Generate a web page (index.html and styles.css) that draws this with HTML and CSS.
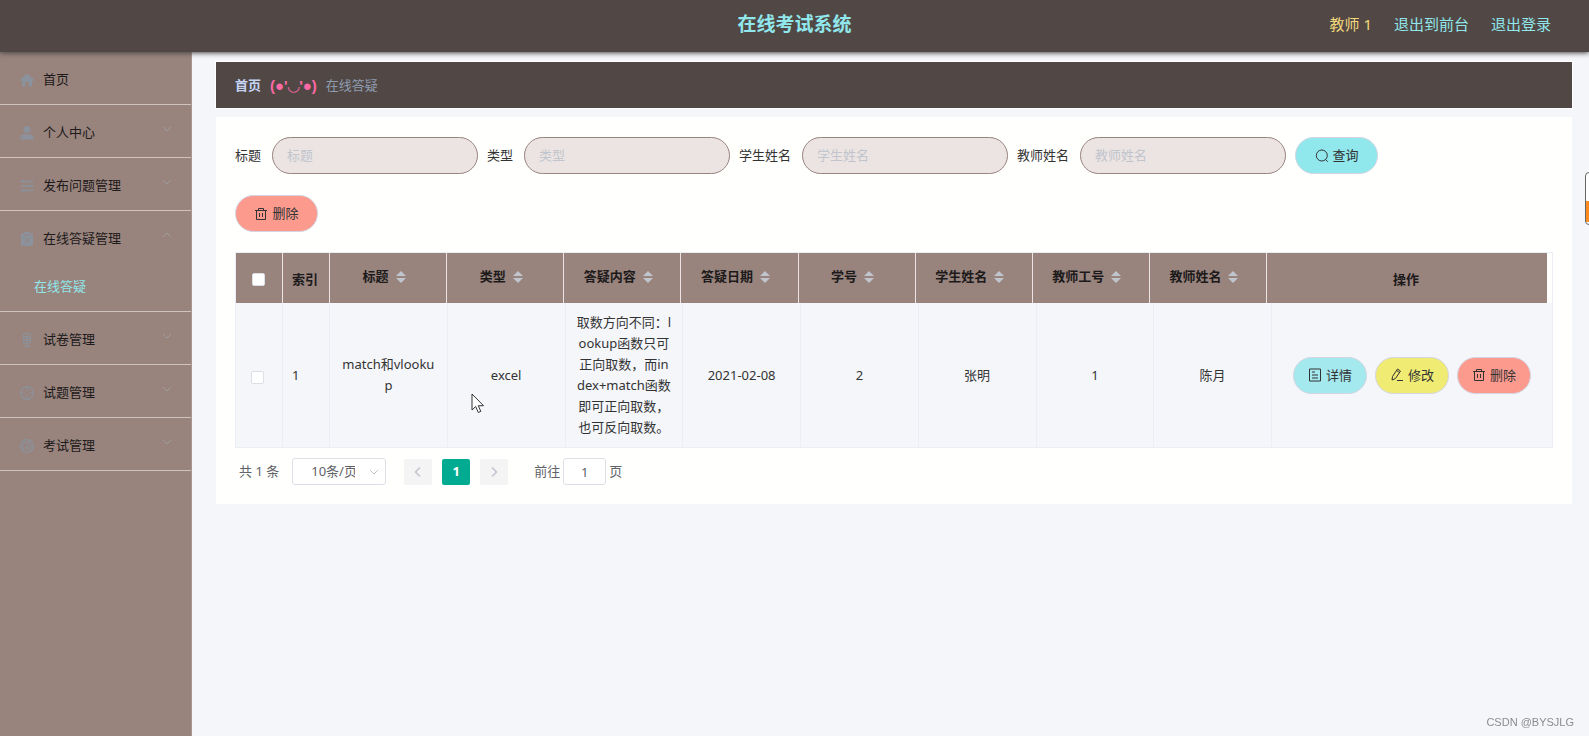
FILE: index.html
```html
<!DOCTYPE html>
<html lang="zh-CN">
<head>
<meta charset="utf-8">
<title>在线考试系统</title>
<link rel="stylesheet" href="styles.css">
</head>
<body>
<svg class="defs" aria-hidden="true">
  <symbol id="down" viewBox="0 0 10 6"><path d="M1 1l4 4 4-4" fill="none" stroke="currentColor"/></symbol>
  <symbol id="trash" viewBox="0 0 14 14"><path d="M1 3.5h12M4.5 3.5v-2h5v2M2.5 3.5v9h9v-9M5.500 6v4M8.500 6v4" fill="none" stroke="currentColor"/></symbol>
</svg>
<header class="topbar">
  <h1 class="title">在线考试系统</h1>
  <nav class="account">
    <span class="user">教师 1</span>
    <a href="#">退出到前台</a>
    <a href="#">退出登录</a>
  </nav>
</header>
<div class="layout">
  <nav class="sidebar">
    <ul class="menu">
      <li><a class="item" href="#"><svg class="icon" viewBox="0 0 14 14"><path d="M7 .5L.3 6.3V8H2v5.500h3.500V9h3v4.500H12V8h1.700V6.300z" fill="currentColor"/></svg><span>首页</span></a></li>
      <li><a class="item" href="#"><svg class="icon" viewBox="0 0 14 14"><circle cx="7" cy="3.600" r="3.500" fill="currentColor"/><path d="M.5 13.500v-2.500q0-2.500 2.500-2.500h8q2.500 0 2.500 2.500v2.500z" fill="currentColor"/></svg><span>个人中心</span><svg class="arrow"><use href="#down"/></svg></a></li>
      <li><a class="item" href="#"><svg class="icon" viewBox="0 0 14 14"><path d="M.5 2.500h13M.5 7h13M.5 11.500h13M3 1v3M10 5.500v3M4 10v3" fill="none" stroke="currentColor" stroke-width="1.300"/></svg><span>发布问题管理</span><svg class="arrow"><use href="#down"/></svg></a></li>
      <li><a class="item" href="#"><svg class="icon" viewBox="0 0 14 14"><path fill-rule="evenodd" d="M1 1.500h3V0h6v1.500h3V14H1zM4 2.500v1h6v-1z" fill="currentColor"/><path d="M4.800 6l4.400 4.400M9.200 6l-4.400 4.400" class="cut"/></svg><span>在线答疑管理</span><svg class="arrow up"><use href="#down"/></svg></a>
        <a class="subitem" href="#">在线答疑</a></li>
      <li><a class="item" href="#"><svg class="icon" viewBox="0 0 14 14"><rect x="3.500" y=".5" width="7" height="10" rx="1.500" fill="none" stroke="currentColor"/><path d="M3.500 3.500h7M3.500 5.500h7M3.500 7.500h7M7 1v12M3 13.500h8" fill="none" stroke="currentColor"/></svg><span>试卷管理</span><svg class="arrow"><use href="#down"/></svg></a></li>
      <li><a class="item" href="#"><svg class="icon" viewBox="0 0 14 14"><circle cx="7" cy="7" r="6.400" fill="none" stroke="currentColor" stroke-width="1.200"/><path d="M7 .5v4.500M7 9v4.500M.5 7H5M9 7h4.500" stroke="currentColor" stroke-width="1.200"/></svg><span>试题管理</span><svg class="arrow"><use href="#down"/></svg></a></li>
      <li><a class="item" href="#"><svg class="icon" viewBox="0 0 14 14"><circle cx="7" cy="7" r="6.400" fill="none" stroke="currentColor" stroke-width="1.200"/><path d="M4 10.500a4.300 4.300 0 1 1 6 0M7 8.500l1.500-4" fill="none" stroke="currentColor" stroke-width="1.200"/><circle cx="7" cy="9" r="1.300" fill="none" stroke="currentColor"/></svg><span>考试管理</span><svg class="arrow"><use href="#down"/></svg></a></li>
    </ul>
  </nav>
  <main class="main">
    <nav class="breadcrumb"><a href="#">首页</a><span class="face">(●'◡'●)</span><span>在线答疑</span></nav>
    <section class="card">
      <form class="filters">
        <label for="f1">标题</label><input id="f1" type="text" placeholder="标题">
        <label for="f2">类型</label><input id="f2" type="text" placeholder="类型">
        <label for="f3">学生姓名</label><input id="f3" type="text" placeholder="学生姓名">
        <label for="f4">教师姓名</label><input id="f4" type="text" placeholder="教师姓名">
        <button class="btn query" type="button"><svg viewBox="0 0 14 14"><circle cx="6.800" cy="6.500" r="5.500" fill="none" stroke="currentColor"/><path d="M10.500 10.500l2.200 2.200" stroke="currentColor"/></svg>查询</button>
      </form>
      <div class="actions"><button class="btn danger" type="button"><svg><use href="#trash"/></svg>删除</button></div>
      <div class="grid">
        <table class="head">
          <colgroup><col class="c-small"><col class="c-small"><col span="8"><col class="c-ops"></colgroup>
          <thead><tr>
            <th><input type="checkbox" aria-label="全选"></th><th>索引</th>
            <th class="sort">标题<i></i></th><th class="sort">类型<i></i></th><th class="sort">答疑内容<i></i></th><th class="sort">答疑日期<i></i></th><th class="sort">学号<i></i></th><th class="sort">学生姓名<i></i></th><th class="sort">教师工号<i></i></th><th class="sort">教师姓名<i></i></th>
            <th>操作</th>
          </tr></thead>
        </table>
        <table class="body">
          <colgroup><col class="c-small"><col class="c-small"><col span="8"><col class="c-ops"></colgroup>
          <tbody><tr>
            <td><input type="checkbox" aria-label="选择第 1 行"></td><td class="index">1</td>
            <td>match和vlookup</td><td>excel</td><td>取数方向不同：lookup函数只可正向取数，而in<br>dex+match函数即可正向取数，也可反向取数。</td><td>2021-02-08</td><td>2</td><td>张明</td><td>1</td><td>陈月</td>
            <td class="ops"><div class="row-actions">
              <button class="btn small detail" type="button"><svg viewBox="0 0 14 14"><path d="M1.500 1h11v12h-11zM4 4h3M4 7h6M4 10h6" fill="none" stroke="currentColor"/></svg>详情</button>
              <button class="btn small edit" type="button"><svg viewBox="0 0 14 14"><path d="M2.500 8.500L7.500 1l3 2-5 7.500-3.500 1.500zM6.500 2.500l3 2M7 12.500h6" fill="none" stroke="currentColor"/></svg>修改</button>
              <button class="btn small danger" type="button"><svg><use href="#trash"/></svg>删除</button>
            </div></td>
          </tr></tbody>
        </table>
      </div>
      <div class="pager">
        <span class="total">共 1 条</span>
        <span class="size"><select aria-label="每页条数"><option>10条/页</option></select><svg><use href="#down"/></svg></span>
        <div class="pages">
          <button type="button" disabled aria-label="上一页"><svg viewBox="0 0 8 12"><path d="M6 1.500L1.500 6 6 10.500" fill="none" stroke="currentColor" stroke-width="1.500"/></svg></button>
          <button type="button" class="current">1</button>
          <button type="button" disabled aria-label="下一页"><svg viewBox="0 0 8 12"><path d="M2 1.500L6.500 6 2 10.500" fill="none" stroke="currentColor" stroke-width="1.500"/></svg></button>
        </div>
        <label class="jump">前往<input type="text" value="1">页</label>
      </div>
    </section>
  </main>
</div>
<div class="float-widget"></div>
<svg class="cursor" viewBox="0 0 14 21"><path d="M1 1v16l3.700-3.500L7.300 19.500l2.500-1.100-2.500-5.700H12.500z" fill="#fff" stroke="#333"/></svg>
<div class="watermark">CSDN @BYSJLG</div>
</body>
</html>
```
FILE: styles.css
```css
* { box-sizing: border-box; }
body {
  margin: 0;
  min-height: 100vh;
  display: flex;
  flex-direction: column;
  background: #f5f6f9;
  color: #333;
  font: 13px/21px "Noto Sans", "Noto Sans CJK SC", sans-serif;
  overflow-x: hidden;
}
a { color: inherit; text-decoration: none; }
input, button, select { font: inherit; color: inherit; margin: 0; }
.defs { display: none; }

.topbar {
  display: grid;
  grid-template-columns: 1fr auto 1fr;
  align-items: center;
  height: 52px;
  padding: 0 38px 4px;
  background: #514845;
  box-shadow: 0 1px 5px #444;
  z-index: 1;
}
.title { grid-column: 2; margin: 0; color: #90e7ec; font-size: 19px; line-height: 28px; }
.account { display: flex; justify-content: flex-end; gap: 22px; font-size: 15px; color: #90e7ec; }
.user { color: #f4d87c; }

.layout { flex: 1; display: flex; }
.sidebar { flex: none; width: 192px; background: #98837d; border-right: 1px solid #a8968f; }
.menu { list-style: none; margin: 0; padding: 0; }
.menu li { border-bottom: 1px solid #d0c3bf; }
.item { display: flex; align-items: center; gap: 9px; height: 52px; padding: 3px 19px 0 20px; color: #1c1a1a; }
.icon { width: 14px; height: 14px; color: #8b929b; }
.cut { fill: none; stroke: #98837d; }
.arrow { width: 10px; height: 6px; margin: 0 0 8px auto; color: #a09da1; }
.arrow.up { transform: rotate(180deg); }
.subitem { display: block; height: 48px; padding: 13px 34px; color: #90e7ec; }

.main { flex: 1; min-width: 0; padding: 10px 17px 24px 24px; }
.breadcrumb {
  display: flex;
  align-items: center;
  gap: 9px;
  height: 46px;
  padding: 0 19px;
  background: #514845;
  box-shadow: 0 0 1px 1px #fff;
  color: #8f9cb0;
}
.breadcrumb a { color: #c5d4f5; font-weight: bold; }
.face { color: #ff69a5; font-family: "Liberation Sans", "DejaVu Sans", sans-serif; font-size: 15px; font-weight: bold; }

.card { margin-top: 9px; padding: 20px 19px 19px; background: #fffffe; }
.filters { display: flex; flex-wrap: wrap; align-items: center; row-gap: 8px; }
.filters label { margin-right: 11px; }
.filters input {
  width: 206px;
  height: 37px;
  margin-right: 9px;
  padding: 0 14px 2px;
  border: 1px solid #98837d;
  border-radius: 19px;
  background: #ece4e3;
}
.filters input::placeholder { color: #c0c4cc; opacity: 1; }
.btn {
  display: flex;
  align-items: center;
  justify-content: center;
  gap: 4px;
  width: 83px;
  height: 37px;
  padding: 0;
  border: 1px solid #d3d6e2;
  border-radius: 19px;
}
.btn svg { width: 14px; height: 14px; }
.btn.small { width: 74px; }
.query { background: #90e7ec; }
.detail { background: #a4e9ee; }
.edit { background: #f0eb73; }
.danger { background: #fc9a8e; }
.actions { margin: 21px 0 20px; }

.grid { border: 1px solid #ebeef5; background: #fffffe; }
table { width: 100%; table-layout: fixed; border-collapse: separate; border-spacing: 0; }
.head { width: calc(100% - 5px); }
.c-small { width: 47px; }
.c-ops { width: 280px; }
th { height: 50px; padding: 2px 2px 0 0; background: #98837d; border-right: 1px solid #ebe4e2; color: #1c1a1a; text-align: center; }
th:last-child, td:last-child { border-right: 0; }
th.sort { padding: 0 8px 3px 0; }
th.sort i { display: inline-grid; row-gap: 2px; margin-left: 7px; vertical-align: middle; }
th.sort i::before, th.sort i::after { content: ""; border: 5px solid transparent; border-top-width: 0; border-bottom: 5px solid #c0c4cc; }
th.sort i::after { border-bottom-width: 0; border-top: 5px solid #c0c4cc; }
td { height: 144px; padding: 9px; background: #f4f6fa; border-right: 1px solid #ebeef5; text-align: center; word-break: break-all; }
td:first-child { padding: 2px 4px 0 0; }
td.index { text-align: left; }
td.ops { padding: 0; }
.row-actions { display: flex; justify-content: center; gap: 8px; }
input[type="checkbox"] {
  appearance: none;
  width: 13px;
  height: 13px;
  border: 1px solid #dcdfe6;
  border-radius: 2px;
  background: #fff;
  vertical-align: middle;
}

.pager { display: flex; align-items: center; height: 27px; margin-top: 10px; padding-left: 4px; color: #606266; }
.total { margin-right: 13px; }
.size { position: relative; width: 94px; margin-right: 18px; }
.size select { width: 100%; height: 27px; padding: 0 30px 0 18px; appearance: none; border: 1px solid #dcdfe6; border-radius: 3px; background: #fff; display: block; }
.size svg { position: absolute; right: 7px; top: 11px; width: 10px; height: 6px; color: #c0c4cc; pointer-events: none; }
.pages { display: flex; gap: 10px; margin-right: 26px; }
.pages button { display: grid; place-items: center; width: 28px; height: 26px; padding: 0; border: 0; border-radius: 2px; background: #f4f4f5; color: #c0c4cc; }
.pages svg { width: 8px; height: 12px; }
.pages .current { background: #00ab91; color: #fff; font-weight: bold; }
.jump { display: flex; align-items: center; gap: 3px; }
.jump input { width: 43px; height: 27px; padding: 0; border: 1px solid #dcdfe6; border-radius: 3px; background: #fff; text-align: center; }

.float-widget { position: fixed; right: -40px; top: 172px; width: 44px; height: 53px; border: 1px solid #666; border-radius: 4px; background: linear-gradient(#fff 28px, #ff8a1e 28px 49px, #fff 49px); }
.cursor { position: absolute; left: 471px; top: 393px; width: 14px; height: 21px; }
.watermark { position: fixed; right: 15px; bottom: 6px; color: #8a8c90; font: 11px/16px "Liberation Sans", sans-serif; }
```
